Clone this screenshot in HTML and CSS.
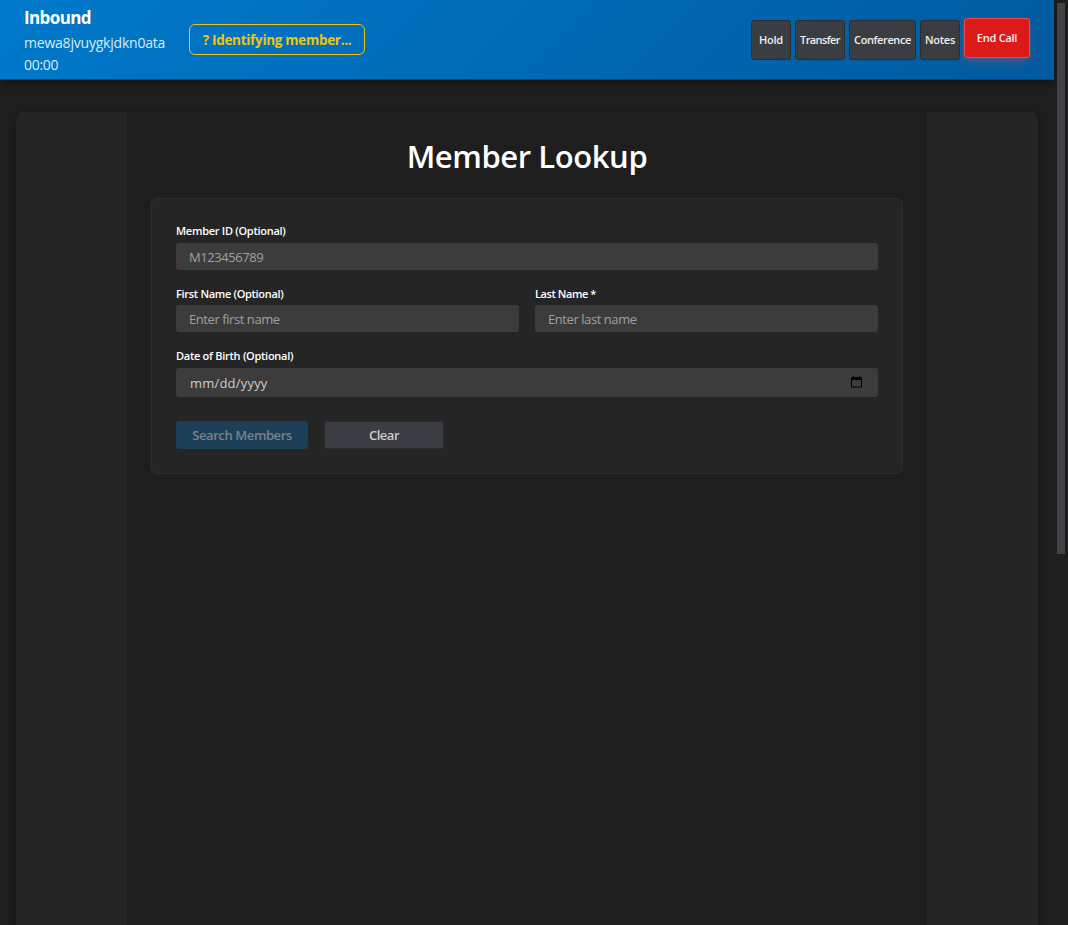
FILE: index.html
```html
<!DOCTYPE html>
<html lang="en">
<head>
<meta charset="utf-8">
<title>Member Lookup</title>
<link rel="stylesheet" href="styles.css">
</head>
<body>
<div class="app">
  <div class="page">
    <header class="call-bar">
      <div class="call-info">
        <div class="call-type"><span>Inbound</span></div>
        <div class="call-id"><span>mewa8jvuygkjdkn0ata</span></div>
        <div class="call-time"><span>00:00</span></div>
      </div>
      <div class="status"><span>? Identifying member...</span></div>
      <div class="actions">
        <button class="action hold">Hold</button>
        <button class="action transfer">Transfer</button>
        <button class="action conference">Conference</button>
        <button class="action notes">Notes</button>
        <button class="action end">End Call</button>
      </div>
    </header>
    <main class="workspace">
      <section class="lookup">
        <h1 class="title"><span>Member Lookup</span></h1>
        <form class="card">
          <div class="field">
            <label class="label"><span class="l-id">Member ID (Optional)</span></label>
            <div class="input"><span class="placeholder">M123456789</span></div>
          </div>
          <div class="row">
            <div class="field">
              <label class="label"><span class="l-first">First Name (Optional)</span></label>
              <div class="input"><span class="placeholder">Enter first name</span></div>
            </div>
            <div class="field">
              <label class="label"><span class="l-last">Last Name *</span></label>
              <div class="input"><span class="placeholder">Enter last name</span></div>
            </div>
          </div>
          <div class="field">
            <label class="label"><span class="l-dob">Date of Birth (Optional)</span></label>
            <div class="input date">
              <span class="p-date">mm/dd/yyyy</span>
              <svg class="calendar" width="11" height="12" viewBox="0 0 11 12"><path d="M2 0h1v1h5V0h1v1h1a1 1 0 0 1 1 1v8.5a1 1 0 0 1-1 1H1a1 1 0 0 1-1-1V2a1 1 0 0 1 1-1h1zM1 4v6.5h9V4z" fill="#000" fill-rule="evenodd"/></svg>
            </div>
          </div>
          <div class="buttons">
            <button class="search" type="button" disabled>Search Members</button>
            <button class="clear" type="button">Clear</button>
          </div>
        </form>
      </section>
    </main>
  </div>
  <div class="scrollbar"><div class="thumb"></div></div>
</div>
</body>
</html>
```
FILE: styles.css
```css
* { box-sizing: border-box; }
body {
  margin: 0;
  background: #1e1e1e;
  color: #fff;
  font-family: "Open Sans", "Noto Sans", sans-serif;
  overflow: hidden;
}
button { font-family: inherit; padding: 0; white-space: nowrap; }
.app { display: flex; height: 925px; overflow: hidden; }
.page { width: 1054px; display: flex; flex-direction: column; }
.scrollbar { width: 14px; padding: 3px 3px 0; }
.thumb { height: 551px; background: #424246; }

.call-bar {
  height: 80px;
  flex: none;
  display: flex;
  align-items: center;
  padding: 0 24px;
  background: linear-gradient(135deg, #007acc 0%, #005a9e 100%);
  border-bottom: 1px solid #2d3b47;
  box-shadow: 0 2px 8px rgba(0, 0, 0, .4);
}
.call-info { width: 141px; margin-right: 24px; padding-top: 2px; white-space: nowrap; }
.call-type { font-size: 17px; font-weight: 700; line-height: 25px; letter-spacing: -.6px; }
.call-id, .call-time { font-size: 14px; line-height: 22px; color: #d9ebf7; }
.call-id { padding-top: 2px; letter-spacing: -.21px; }
.call-time { letter-spacing: -.3px; }
.status {
  width: 176px;
  height: 31px;
  border: 1px solid #f1c40f;
  border-radius: 6px;
  color: #f1c40f;
  font-size: 13.5px;
  font-weight: 700;
  line-height: 30px;
  letter-spacing: -.3px;
  text-align: center;
  white-space: nowrap;
}
.actions { display: flex; gap: 4px; margin-left: auto; }
.action {
  height: 40px;
  border: 1px solid #2d2d30;
  border-radius: 3px;
  background: #3a3d41;
  color: #f0f0f0;
  font-size: 11px;
  font-weight: 600;
  letter-spacing: -.25px;
}
.hold, .notes { width: 40px; }
.transfer { width: 50px; letter-spacing: -.6px; }
.conference { width: 67px; letter-spacing: -.4px; }
.end {
  width: 66px;
  margin-top: -2px;
  background: #dc1a1a;
  border-color: #f14c4c;
  box-shadow: 0 4px 8px rgba(241, 76, 76, .3);
}

.workspace {
  height: 1000px;
  margin: 32px 16px 0;
  border-radius: 8px;
  background: #252526;
  box-shadow: 0 2px 8px rgba(0, 0, 0, .3);
}
.lookup { width: 800px; height: 1000px; margin: 0 auto; padding: 24px; background: #1e1e1e; }
.title { margin: 0; height: 62px; font-size: 31px; line-height: 41px; font-weight: 600; letter-spacing: -.42px; text-align: center; }
.card {
  height: 276px;
  padding: 24px;
  border: 1px solid #2d2d30;
  border-radius: 6px;
  background: #252526;
}
.field { flex: 1; }
.row { display: flex; gap: 16px; margin: 16px 0; }
.label { display: block; height: 20px; font-size: 11px; font-weight: 600; line-height: 16px; white-space: nowrap; }
.row .label { height: 19px; }
.l-id { letter-spacing: -.28px; }
.l-first { letter-spacing: -.31px; }
.l-last { letter-spacing: -.43px; }
.l-dob { letter-spacing: -.28px; }
.input {
  height: 27px;
  display: flex;
  align-items: center;
  padding: 1px 13px 0;
  border-radius: 3px;
  background: #3c3c3c;
  color: #a0a0a0;
  font-size: 13px;
  line-height: 18px;
}
.placeholder { letter-spacing: -.43px; }
.date { height: 29px; justify-content: space-between; padding: 0 16px 0 14px; color: #ccc; letter-spacing: .2px; }
.calendar { margin-bottom: 1px; }
.buttons { display: flex; gap: 16px; margin-top: 24px; }
.search, .clear { height: 28px; border-radius: 3px; font-size: 13px; font-weight: 600; }
.search { width: 132px; border: 0; background: #1b3f57; color: #7d8285; letter-spacing: -.4px; }
.clear { width: 120px; border: 1px solid #2d2d30; background: #3a3d41; color: #ccc; letter-spacing: -.5px; }
```
